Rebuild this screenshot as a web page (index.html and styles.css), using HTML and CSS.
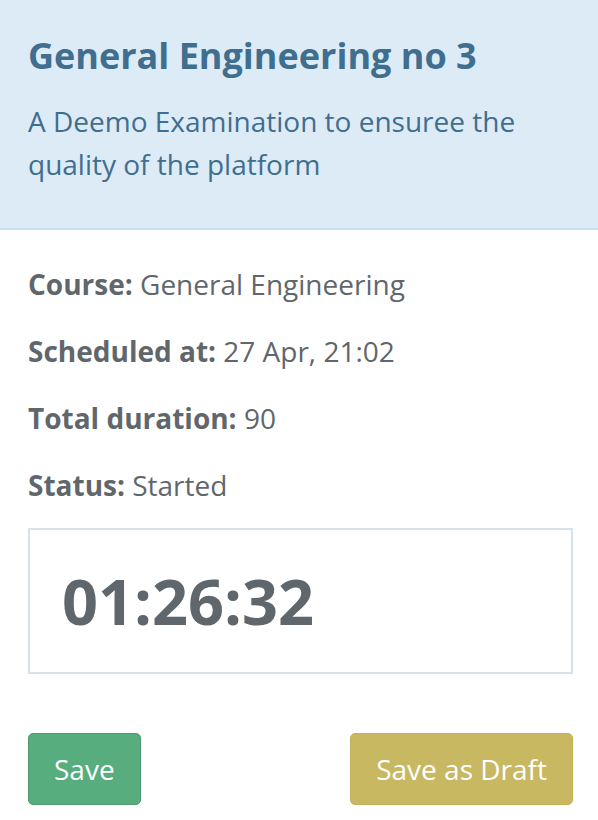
FILE: index.html
```html
<!DOCTYPE html>
<html>
<head>
<meta charset="utf-8">
<link rel="stylesheet" href="styles.css">
</head>
<body>
<div class="card">
  <header class="card-header">
    <h1 class="title">General Engineering no 3</h1>
    <p class="subtitle">A Deemo Examination to ensuree the quality of the platform</p>
  </header>
  <section class="card-body">
    <div class="details">
      <p class="row"><strong>Course:</strong> General Engineering</p>
      <p class="row"><strong>Scheduled at:</strong> 27 Apr, 21:02</p>
      <p class="row"><strong>Total duration:</strong> 90</p>
      <p class="row"><strong>Status:</strong> Started</p>
    </div>
    <div class="timer">01:26:32</div>
    <div class="actions">
      <button class="btn btn-save">Save</button>
      <button class="btn btn-draft">Save as Draft</button>
    </div>
  </section>
</div>
</body>
</html>
```
FILE: styles.css
```css
html, body {
  margin: 0;
  padding: 0;
  background: #ffffff;
}
body {
  font-family: "Open Sans", "Liberation Sans", sans-serif;
  color: #5f676c;
}
.card-header {
  background: #ddebf7;
  border-bottom: 2px solid #c5e4ee;
  padding: 30px 25px 42px 28px;
}
.title {
  margin: 0;
  font-size: 36px;
  font-weight: 700;
  line-height: 52px;
  color: #406e8e;
}
.subtitle {
  margin: 18px 0 0;
  font-size: 28px;
  line-height: 43px;
  color: #406e8e;
}
.card-body {
  padding: 36px 25px 0 28px;
}
.details {
  display: flex;
  flex-direction: column;
  gap: 30px;
}
.row {
  margin: 0;
  font-size: 28px;
  line-height: 37px;
}
.row strong {
  font-weight: 700;
}
.timer {
  margin-top: 24px;
  border: 2px solid #d6e1ea;
  padding: 36px 32px;
  font-size: 63px;
  font-weight: 700;
  line-height: 70px;
  color: #5f676c;
}
.actions {
  display: flex;
  justify-content: space-between;
  margin-top: 59px;
}
.btn {
  font-family: "Open Sans", "Liberation Sans", sans-serif;
  font-size: 28px;
  color: #ffffff;
  height: 72px;
  border-radius: 5px;
  padding: 0 25px;
  cursor: pointer;
}
.btn-save {
  background: #57ad7d;
  border: 1px solid #4c9a6e;
}
.btn-draft {
  background: #c8b862;
  border: 1px solid #c2b25c;
}
```
